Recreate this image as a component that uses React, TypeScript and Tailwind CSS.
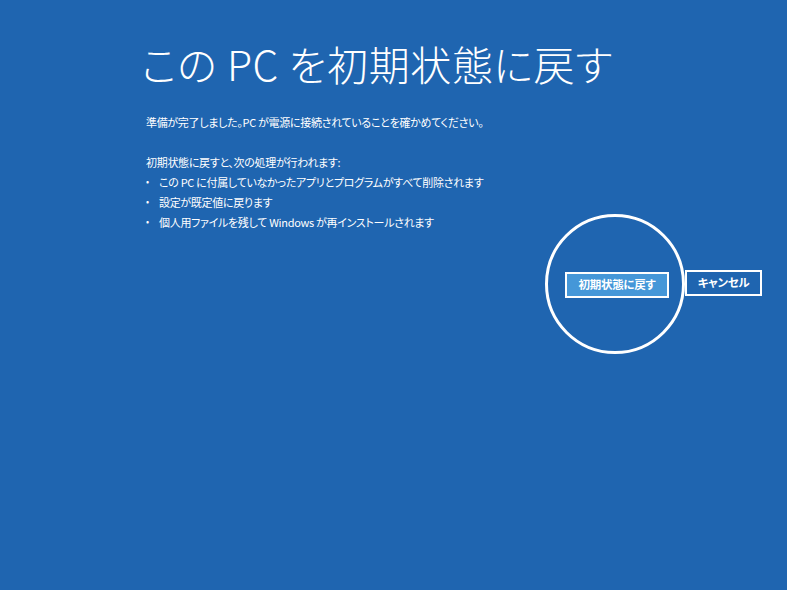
import React from 'react';

const jp = "font-['Noto_Sans_CJK_JP','Noto_Sans',sans-serif] [font-feature-settings:'palt']";

const bullets = [
  'この PC に付属していなかったアプリとプログラムがすべて削除されます',
  '設定が既定値に戻ります',
  '個人用ファイルを残して Windows が再インストールされます',
];

export default function App() {
  return (
    <div className={`w-[787px] h-[590px] bg-[#1f65b0] text-white overflow-hidden ${jp}`}>
      <div className="pl-[141px] pt-[39px]">
        <h1 className="text-[41px] leading-[48px] font-light tracking-[0.015em]">この PC を初期状態に戻す</h1>
      </div>

      <div className="pl-[146px] mt-[25px] text-[11px] leading-[20px] tracking-[-0.3px]">
        <p>準備が完了しました。PC が電源に接続されていることを確かめてください。</p>
        <p className="mt-[20px]">初期状態に戻すと、次の処理が行われます:</p>
        <ul>
          {bullets.map(b => (
            <li key={b} className="flex items-center">
              <span className="w-[13px] flex-shrink-0 text-[9px]">•</span>
              <span>{b}</span>
            </li>
          ))}
        </ul>
      </div>

      <div className="mt-[38px] flex justify-end pr-[25px] gap-[16px]">
        <div className="relative">
          <button className="w-[104px] h-[26px] border-2 border-white bg-[#4597d8] text-[11.5px] font-bold leading-none tracking-[-0.3px]">
            初期状態に戻す
          </button>
          <div className="absolute left-[-20px] top-[-56px] w-[140px] h-[140px] rounded-full border-[3px] border-white pointer-events-none" />
        </div>
        <button className="w-[77px] h-[26px] border-2 border-white bg-[#1f65b0] text-[11.5px] font-bold leading-none tracking-[-0.3px]">
          キャンセル
        </button>
      </div>
    </div>
  );
}
